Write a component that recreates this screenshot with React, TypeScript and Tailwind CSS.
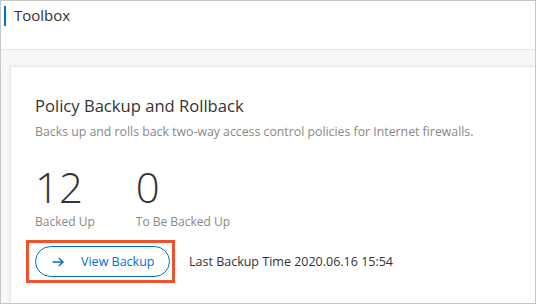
import React from "react";

export default function App() {
  return (
    <div
      className="w-[536px] h-[304px] border border-[#c6c6c6] overflow-hidden bg-white flex flex-col text-[#333]"
      style={{ fontFamily: '"Open Sans", "Noto Sans", sans-serif' }}
    >
      <div className="h-[49px] shrink-0 border-b border-[#e6e6e6] flex items-start pl-[3px] pt-[5px]">
        <div className="w-[2px] h-[20px] bg-[#0070cc]" />
        <div className="ml-[8px] text-[15px] leading-[19px] text-[#333]">Toolbox</div>
      </div>
      <div className="flex-1 bg-[#f7f7f7] pl-[9px] pt-[16px] overflow-hidden">
        <div className="w-[600px] h-[300px] bg-white border border-[#e6e6e6] shadow-[0_0_4px_rgba(0,0,0,0.06)] pl-[24px] pt-[28px]">
          <div className="text-[16.6px] leading-[22px] text-[#333]">Policy Backup and Rollback</div>
          <div className="mt-[7px] text-[12.3px] leading-[16px] text-[#888]">
            Backs up and rolls back two-way access control policies for Internet firewalls.
          </div>
          <div className="mt-[27px] flex gap-[41px]">
            <div className="flex flex-col">
              <div className="text-[42px] leading-[40px] font-light text-[#333]">12</div>
              <div className="mt-[7px] text-[12px] leading-[15px] text-[#888]">Backed Up</div>
            </div>
            <div className="flex flex-col">
              <div className="text-[42px] leading-[40px] font-light text-[#333]">0</div>
              <div className="mt-[7px] text-[12px] leading-[15px] text-[#888]">To Be Backed Up</div>
            </div>
          </div>
          <div className="mt-[11px] -ml-[9px] flex items-center">
            <div className="border-[3px] border-[#f0522b] pl-[6px] pr-[2px] py-[3px]">
              <button className="w-[135px] h-[31px] rounded-full border border-[#0070cc] flex items-center pl-[16px] text-[#0070cc] bg-white">
                <svg width="12" height="10" viewBox="0 0 12 10" fill="none" stroke="#0070cc" strokeWidth="1.3">
                  <path d="M0.5 5H11M6.8 1L11 5L6.8 9" />
                </svg>
                <span className="ml-[17px] text-[12.5px] leading-[16px]">View Backup</span>
              </button>
            </div>
            <div className="ml-[14px] text-[12.5px] leading-[16px] text-[#333]">Last Backup Time 2020.06.16 15:54</div>
          </div>
        </div>
      </div>
    </div>
  );
}
